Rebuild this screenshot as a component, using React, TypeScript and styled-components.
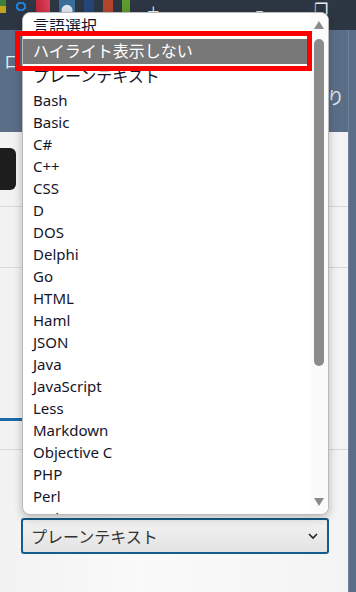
import styled, { createGlobalStyle } from 'styled-components';

const GlobalStyle = createGlobalStyle`
  html, body {
    margin: 0;
    padding: 0;
    width: 356px;
    height: 592px;
    overflow: hidden;
    font-family: "Noto Sans", "Noto Sans CJK JP", sans-serif;
  }
`;

const languages = [
  'Bash', 'Basic', 'C#', 'C++', 'CSS', 'D', 'DOS', 'Delphi', 'Go', 'HTML', 'Haml',
  'JSON', 'Java', 'JavaScript', 'Less', 'Markdown', 'Objective C', 'PHP', 'Perl', 'Python',
];

const Page = styled.div`
  position: relative;
  width: 356px;
  height: 592px;
  display: flex;
  flex-direction: column;
  background: #2d3743;
`;

const TopBar = styled.div`
  height: 30px;
  display: flex;
  align-items: flex-start;
  color: #e8ecf0;
`;

const Favicons = styled.div`
  display: flex;
  gap: 9px;
  width: 132px;
`;

const Favicon = styled.span<{ $bg: string; $w?: number }>`
  display: block;
  width: ${(p) => p.$w ?? 12}px;
  height: 13px;
  background: ${(p) => p.$bg};
`;

const WinControl = styled.span<{ $ml: number; $mt?: number; $size?: number }>`
  margin-left: ${(p) => p.$ml}px;
  margin-top: ${(p) => p.$mt ?? 0}px;
  font-size: ${(p) => p.$size ?? 16}px;
  line-height: 1;
  font-weight: 300;
`;

const Body = styled.div`
  flex: 1;
  display: flex;
`;

const Main = styled.div`
  flex: 1;
  display: flex;
  flex-direction: column;
`;

const Strip = styled.div`
  width: 7px;
  background: #5a6f87;
  border-left: 1px solid #6d8299;
`;

const Band = styled.div`
  height: 102px;
  background: #5a6f87;
  display: flex;
  justify-content: space-between;
  color: #e6ebf0;
  font-size: 17px;
  padding: 0 4px 0 4px;
  box-sizing: border-box;
`;

const BandText = styled.span<{ $mt: number }>`
  margin-top: ${(p) => p.$mt}px;
  line-height: 20px;
`;

const Content = styled.div`
  flex: 1;
  background: linear-gradient(90deg, #f2f2f2 0%, #fafafa 40%, #f4f4f4 100%);
  display: flex;
  flex-direction: column;
`;

const Section = styled.div<{ $h: number; $line?: boolean }>`
  height: ${(p) => p.$h}px;
  border-bottom: ${(p) => (p.$line ? '1px solid #d8d8d8' : 'none')};
  box-sizing: border-box;
  position: relative;
  display: flex;
  flex-direction: column;
`;

const DarkButton = styled.div`
  margin: 16px 0 0 -30px;
  width: 46px;
  height: 42px;
  background: #1d1d1d;
  border-radius: 6px;
`;

const TabLine = styled.div`
  margin-top: auto;
  margin-bottom: 28px;
  width: 22px;
  height: 3px;
  background: #1a6aa8;
`;

const SelectBox = styled.div`
  margin: 68px 0 0 21px;
  width: 308px;
  height: 36px;
  box-sizing: border-box;
  border: 2px solid #145c8c;
  border-radius: 3px;
  background: linear-gradient(180deg, #f3f3f3 0%, #e3e3e3 100%);
  display: flex;
  align-items: center;
  justify-content: space-between;
  padding: 0 8px 0 8px;
  font-size: 16px;
  color: #333;
`;

const Dropdown = styled.div`
  position: absolute;
  left: 22px;
  top: 12px;
  width: 307px;
  height: 503px;
  box-sizing: border-box;
  background: #fff;
  border: 1px solid #b9b9b9;
  border-radius: 8px;
  box-shadow: 0 3px 10px rgba(0, 0, 0, 0.25);
  overflow: hidden;
  display: flex;
`;

const List = styled.ul`
  flex: 1;
  margin: 0;
  padding: 1px 0 0 0;
  list-style: none;
`;

const Item = styled.li<{ $cjk?: boolean; $active?: boolean }>`
  height: ${(p) => (p.$cjk ? 25 : 22)}px;
  line-height: ${(p) => (p.$cjk ? 25 : 22)}px;
  font-size: ${(p) => (p.$cjk ? 16 : 15)}px;
  padding-left: 10px;
  color: ${(p) => (p.$active ? '#fff' : '#141428')};
  background: ${(p) => (p.$active ? '#787878' : 'transparent')};
  white-space: nowrap;
`;

const ScrollTrack = styled.div`
  width: 18px;
  background: #fbfbfb;
  display: flex;
  flex-direction: column;
  align-items: center;
  padding: 8px 0 8px 0;
  box-sizing: border-box;
`;

const Arrow = styled.svg`
  width: 10px;
  height: 8px;
  fill: #8a8a8a;
  flex-shrink: 0;
`;

const Thumb = styled.div`
  width: 10px;
  height: 327px;
  margin-top: 10px;
  border-radius: 5px;
  background: #8b8b8b;
`;

const Spacer = styled.div`
  flex: 1;
`;

const Highlight = styled.div`
  position: absolute;
  left: 15px;
  top: 31px;
  width: 297px;
  height: 40px;
  box-sizing: border-box;
  border: 5px solid #ff0000;
`;

export default function App() {
  return (
    <>
      <GlobalStyle />
      <Page>
        <TopBar>
          <Favicons>
            <Favicon $bg="linear-gradient(#3f7f3a 50%, #c2a51c 50%)" $w={6} />
            <Favicon $bg="radial-gradient(circle, transparent 3px, #1e7fd6 3px, #1e7fd6 5px, transparent 5px)" $w={12} />
            <Favicon $bg="linear-gradient(90deg, #c0263a, #e0405a)" $w={14} />
            <Favicon $bg="radial-gradient(circle at 50% 80%, #dfe6ee 5px, #3a6e9a 6px)" $w={16} />
            <Favicon $bg="#24467a" $w={10} />
            <Favicon $bg="#b5462e" $w={10} />
            <Favicon $bg="#5d9b2e" $w={8} />
          </Favicons>
          <WinControl $ml={15} $size={22}>+</WinControl>
          <WinControl $ml={96} $mt={2}>–</WinControl>
          <WinControl $ml={50} $mt={1}>❐</WinControl>
        </TopBar>
        <Body>
          <Main>
            <Band>
              <BandText $mt={22}>ロ</BandText>
              <BandText $mt={58}>り</BandText>
            </Band>
            <Content>
              <Section $h={75} $line>
                <DarkButton />
              </Section>
              <Section $h={61} $line />
              <Section $h={182} $line>
                <TabLine />
              </Section>
              <Section $h={142}>
                <SelectBox>
                  プレーンテキスト
                  <svg width="12" height="8" viewBox="0 0 12 8">
                    <path d="M2 2 L6 6 L10 2" fill="none" stroke="#222" strokeWidth="1.6" />
                  </svg>
                </SelectBox>
              </Section>
            </Content>
          </Main>
          <Strip />
        </Body>
        <Dropdown>
          <List>
            <Item $cjk>言語選択</Item>
            <Item $cjk $active>ハイライト表示しない</Item>
            <Item $cjk>プレーンテキスト</Item>
            {languages.map((l) => (
              <Item key={l}>{l}</Item>
            ))}
          </List>
          <ScrollTrack>
            <Arrow viewBox="0 0 10 8">
              <path d="M5 0 L10 8 L0 8 Z" />
            </Arrow>
            <Thumb />
            <Spacer />
            <Arrow viewBox="0 0 10 8">
              <path d="M0 0 L10 0 L5 8 Z" />
            </Arrow>
          </ScrollTrack>
        </Dropdown>
        <Highlight />
      </Page>
    </>
  );
}
